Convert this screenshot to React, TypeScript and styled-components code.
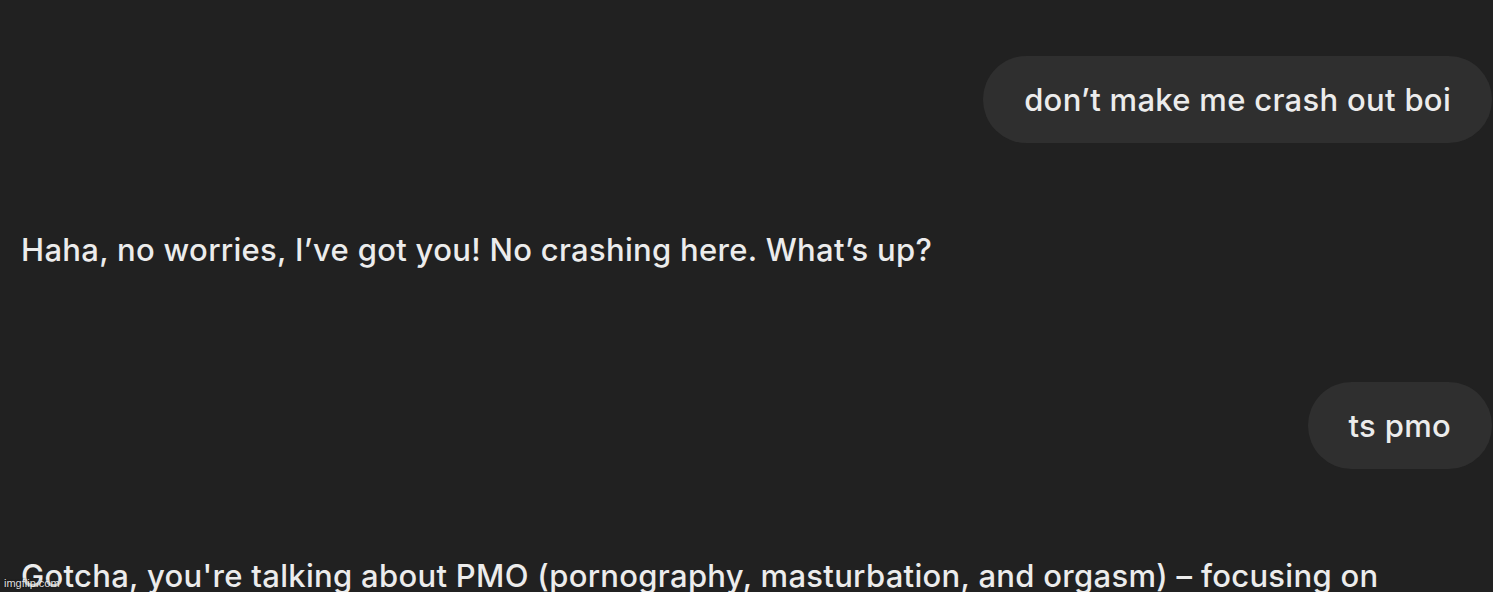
import React from "react";
import styled, { createGlobalStyle } from "styled-components";

const Global = createGlobalStyle`
  html, body { margin: 0; padding: 0; background: #212121; overflow: hidden; }
  body { font-family: Inter, "Noto Sans", "Liberation Sans", sans-serif; }
`;

const Thread = styled.main`
  display: flex;
  flex-direction: column;
  padding: 56px 1px 0 21px;
  height: 592px;
  box-sizing: border-box;
`;

const UserRow = styled.div`
  display: flex;
  justify-content: flex-end;
`;

const Bubble = styled.div`
  background: #2f2f2f;
  color: #ececec;
  border-radius: 44px;
  height: 87px;
  box-sizing: border-box;
  padding: 0 41px;
  display: flex;
  align-items: center;
  font-size: 31px;
  font-weight: 500;
  letter-spacing: 0.3px;
  white-space: nowrap;
`;

const Assistant = styled.p<{ $after?: number }>`
  margin: 85px 0 ${(p) => p.$after ?? 110}px 0;
  color: #ececec;
  font-size: 31px;
  font-weight: 500;
  line-height: 44px;
  letter-spacing: 0.3px;
  white-space: nowrap;
`;

const Watermark = styled.span`
  position: absolute;
  left: 4px;
  bottom: 3px;
  font-family: "Liberation Sans", Arial, sans-serif;
  font-size: 11px;
  color: #ffffff;
  opacity: 0.85;
  text-shadow: 0 0 2px #000;
`;

export default function App() {
  return (
    <>
      <Global />
      <Thread>
        <UserRow>
          <Bubble>don’t make me crash out boi</Bubble>
        </UserRow>
        <Assistant>Haha, no worries, I’ve got you! No crashing here. What’s up?</Assistant>
        <UserRow>
          <Bubble>ts pmo</Bubble>
        </UserRow>
        <Assistant>
          Gotcha, you're talking about PMO (pornography, masturbation, and orgasm) – focusing on
        </Assistant>
      </Thread>
      <Watermark>imgflip.com</Watermark>
    </>
  );
}
